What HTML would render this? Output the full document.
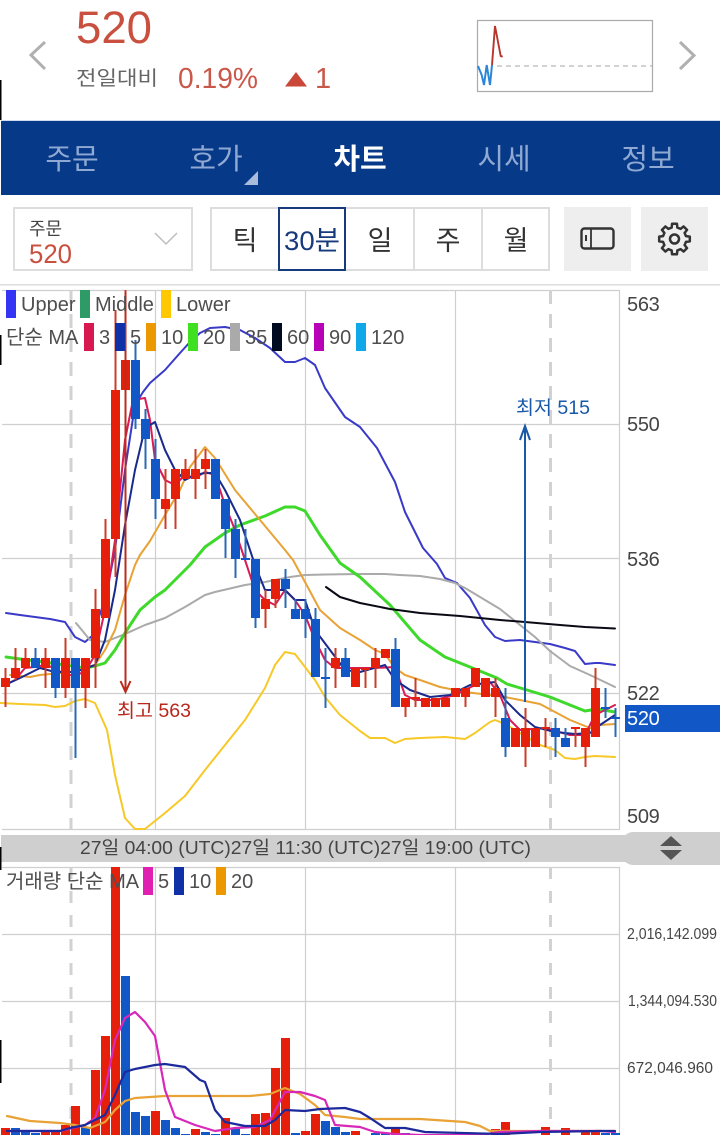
<!DOCTYPE html>
<html lang="ko"><head><meta charset="utf-8"><title>차트</title>
<style>
html,body{margin:0;padding:0;background:#fff}
body{width:720px;height:1135px;overflow:hidden}
svg{display:block}
text{font-family:"Liberation Sans","Noto Sans CJK KR",sans-serif}
.lg{font-size:20px;fill:#4e4e4e}
.ax{font-size:20px;fill:#444;letter-spacing:-.3px}
.vx{font-size:15.5px;fill:#444}
.tab{font-size:29px;fill:#8fa9d2;text-anchor:middle}
.seg{font-size:27px;fill:#333;text-anchor:middle}
</style></head><body>
<svg width="720" height="1135" viewBox="0 0 720 1135" xmlns="http://www.w3.org/2000/svg">
<rect width="720" height="1135" fill="#fff"/>

<!-- header -->
<text x="76" y="43" font-size="45" fill="#c9503f" textLength="76" lengthAdjust="spacingAndGlyphs">520</text>
<text x="76" y="85" font-size="20" fill="#666" textLength="82" lengthAdjust="spacingAndGlyphs">전일대비</text>
<text x="178" y="88" font-size="29" fill="#c9584a" textLength="80" lengthAdjust="spacingAndGlyphs">0.19%</text>
<path d="M285 86.500L296 72L307 86.500Z" fill="#c9483a"/>
<text x="315" y="88" font-size="29" fill="#c9584a">1</text>
<path d="M45 42L31 55L45 69" fill="none" stroke="#b0b0b0" stroke-width="3"/>
<path d="M680 42L694 55.500L680 69" fill="none" stroke="#b0b0b0" stroke-width="3"/>
<rect x="477.500" y="20.500" width="175" height="71" fill="#fff" stroke="#aaa" stroke-width="1.200"/>
<path d="M497 66H652" stroke="#c4c4c4" stroke-width="1.500" stroke-dasharray="5 4"/>
<path d="M478 66L481.700 75L484 85L486.700 65L490 85L492 65" fill="none" stroke="#2b86d6" stroke-width="2"/>
<path d="M492 65L495 26L500.700 56L502.700 56.700" fill="none" stroke="#b8352b" stroke-width="1.900"/>
<rect x="0" y="80" width="1.500" height="40" fill="#000"/>

<!-- tabs -->
<rect x="1" y="120" width="719" height="1.500" fill="#cfdcf0"/>
<rect x="1" y="121" width="719" height="74" fill="#073989"/>
<text class="tab" x="72" y="169">주문</text>
<text class="tab" x="216" y="169">호가</text>
<text class="tab" x="360" y="169" style="fill:#fff;font-weight:700">차트</text>
<text class="tab" x="504" y="169">시세</text>
<text class="tab" x="648" y="169">정보</text>
<path d="M258 171V185H244Z" fill="#a9bcdb"/>

<!-- controls -->
<rect x="14" y="208" width="178" height="62" fill="#fff" stroke="#ddd" stroke-width="2"/>
<text x="29" y="235" font-size="18" fill="#444">주문</text>
<text x="29" y="263" font-size="27" fill="#c9503f" textLength="43" lengthAdjust="spacingAndGlyphs">520</text>
<path d="M155 233L166 244L177 233" fill="none" stroke="#bdbdbd" stroke-width="1.500"/>
<rect x="211" y="208" width="338" height="62" fill="#fff" stroke="#ddd" stroke-width="2"/>
<path d="M414 208V270M482 208V270" stroke="#ddd" stroke-width="2"/>
<rect x="279" y="208" width="66" height="62" fill="#fff" stroke="#163a7c" stroke-width="2"/>
<text class="seg" x="245" y="250">틱</text>
<text class="seg" x="312" y="250" style="fill:#163a7c" textLength="56" lengthAdjust="spacingAndGlyphs">30분</text>
<text class="seg" x="380" y="250">일</text>
<text class="seg" x="448" y="250">주</text>
<text class="seg" x="516" y="250">월</text>
<rect x="564" y="207" width="67" height="64" fill="#eee"/>
<rect x="641" y="207" width="67" height="64" fill="#eee"/>
<rect x="581.500" y="228.500" width="32" height="20" rx="3" fill="none" stroke="#333" stroke-width="2.400"/>
<path d="M591 229V248" stroke="#333" stroke-width="1.800"/>
<path d="M586 235V241" stroke="#333" stroke-width="2"/>
<g transform="translate(674.500 239)" fill="none" stroke="#333" stroke-width="2.500" stroke-linejoin="round">
<circle r="4.500"/>
<path d="M11.450 -2.850L15.310 -2.420L15.310 2.420L11.450 2.850L10.110 6.080L12.540 9.110L9.110 12.540L6.080 10.110L2.850 11.450L2.420 15.310L-2.420 15.310L-2.850 11.450L-6.080 10.110L-9.110 12.540L-12.540 9.110L-10.110 6.080L-11.450 2.850L-15.310 2.420L-15.310 -2.420L-11.450 -2.850L-10.110 -6.080L-12.540 -9.110L-9.110 -12.540L-6.080 -10.110L-2.850 -11.450L-2.420 -15.310L2.420 -15.310L2.850 -11.450L6.080 -10.110L9.110 -12.540L12.540 -9.110L10.110 -6.080Z"/>
</g>
<rect x="0" y="284" width="720" height="1.500" fill="#ddd"/>

<!-- main grid -->
<path d="M2 290.500H619.500V829.500H2M2 424.500H619.500M2 558.500H619.500M2 693.500H619.500M155.500 290V829M305.500 290V829M455.500 290V829" fill="none" stroke="#cfcfcf" stroke-width="1.200"/>
<path d="M71 290V829M550.500 290V829" stroke="#d2d2d2" stroke-width="3" stroke-dasharray="14 10"/>

<!-- main lines -->
<g style="fill:none;stroke-linejoin:round;stroke-linecap:round">
<polyline stroke="#3a3ac8" stroke-width="2" points="6,613 20,615 35,617 50,619 65,622 75,637 85,642 92,636 105,600 115,550 125,470 135,405 143,392 150,383 165,370 180,353 190,342 200,333 210,328 225,327 240,330 255,338 270,348 285,362 295,362 305,358 315,365 325,388 345,417 360,427 377,448 395,482 405,512 423,548 437,564 445,578 457,583 470,598 485,625 495,637 505,641 520,640 535,642 550,644 565,648 575,651 585,664 595,663 600,663 615,665"/>
<polyline stroke="#f7c928" stroke-width="2" points="0,703 20,704 45,705 55,707 65,706 75,701 85,699 95,703 107,730 115,775 125,818 135,829 145,829 165,813 185,796 205,770 225,745 245,720 265,688 275,665 285,652 295,654 305,667 315,680 325,697 340,715 360,731 370,738 385,738 395,743 405,739 420,738 445,737 465,739 475,733 490,722 495,720 505,724 540,745 555,750 565,758 575,759 585,757 595,756 615,757"/>
<polyline stroke="#aaa" stroke-width="2" points="76,623 90,640 105,642 125,634 145,625 165,618 185,607 205,595 215,592 245,585 265,582 290,577 305,575 325,574.500 360,574 385,574 400,575 420,576 440,579 455,583 465,588 480,597 500,609 520,625 535,637 550,651 570,666 590,675 615,687"/>
<polyline stroke="#3fd92c" stroke-width="3" points="6,657 20,659 45,662 85,668 95,666 105,663 115,650 125,633 140,610 155,597 165,590 190,565 205,547 225,533 240,525 265,516 285,507 295,507 305,511 320,535 340,563 360,577 390,605 420,640 445,657 470,667 497,678 507,684 527,690 550,697 570,705 585,711 597,709 615,712"/>
<polyline stroke="#e8a235" stroke-width="2" points="10,675 30,677 40,675 50,674 70,672 95,665 105,650 115,630 125,595 135,565 140,555 150,541 165,515 180,490 190,467 205,447 215,458 235,490 260,520 285,550 293,560 305,582 320,610 340,628 360,640 375,650 385,654 395,668 405,675 420,680 440,687 465,692 490,695 505,697 520,700 540,704 555,712 570,720 590,728 600,725 615,724"/>
<polyline stroke="#d81c55" stroke-width="2" points="5,685 15,680 25,668 35,667 45,665 55,668 65,675 75,675 85,672 95,655 105,610 115,540 125,440 133,400 145,398 150,420 155,460 165,480 175,485 185,475 195,478 205,472 215,475 225,505 235,530 245,560 255,590 265,600 275,605 285,590 295,600 305,615 315,640 325,660 335,668 345,668 375,668 395,667 405,695 415,700 435,700 455,695 475,685 490,682 500,695 510,720 520,730 545,728 570,735 585,735 595,715 615,705"/>
<polyline stroke="#1a2a8c" stroke-width="2" points="5,685 20,678 40,668 55,672 75,672 95,665 105,640 115,590 125,525 135,470 145,428 155,422 165,450 175,470 185,480 195,475 205,473 215,473 225,490 240,520 255,565 265,590 285,590 295,600 305,600 315,630 330,650 345,670 360,672 385,665 395,680 410,690 430,697 450,695 470,685 495,682 505,700 520,715 535,727 555,732 575,734 590,733 600,725 615,715"/>
<polyline stroke="#0a0a14" stroke-width="2" points="326,587 340,597 360,603 390,609 420,613 460,616 480,618 500,620 525,622 560,625 585,627 615,628.500"/>
</g>

<g transform="translate(.5 0)">
<!-- candle wicks -->
<path fill="none" stroke="#c93d2a" stroke-width="2" d="M5 668V707M15 648V680M25 648V668M45 648V688M65 638V698M85 658V708M95 589V688M105 519V618M115 310V577M125 290V560M165 469V529M175 469V529M185 459V479M195 449V499M205 449V489M265 590V628M275 579V608M335 648V688M355 668V687M365 669V688M375 648V688M405 698V717M415 678V707M465 688V707M495 678V717M525 708V767M545 718V747M575 728V747M585 728V767M595 668V737"/>
<path fill="none" stroke="#2a6ab4" stroke-width="2" d="M35 648V668M55 658V698M75 658V758M135 340V429M145 409V469M155 439V519M225 499V558M235 519V578M245 529V559M255 559V628M285 569V608M295 599V619M305 599V638M315 608V677M325 648V708M345 648V677M395 638V707M505 688V757M555 718V757M565 728V747M605 688V718M615 708V737"/>
<!-- red bodies -->
<path fill="#e61f0b" d="M.5 678h9v9h-9zM10.500 668h9v10h-9zM20.500 658h9v10h-9zM40.500 658h9v10h-9zM60.500 658h9v30h-9zM80.500 658h9v30h-9zM90.500 609h9v49h-9zM100.500 539h9v79h-9zM110.500 390h9v149h-9zM120.500 360h9v30h-9zM160.500 499h9v10h-9zM170.500 469h9v30h-9zM180.500 469h9v10h-9zM190.500 469h9v10h-9zM200.500 459h9v10h-9zM260.500 599h9v10h-9zM270.500 579h9v20h-9zM330.500 658h9v10h-9zM350.500 668h9v19h-9zM360.500 668h9v2h-9zM370.500 658h9v10h-9zM380.500 649h9v9h-9zM400.500 698h9v9h-9zM410.500 697h9v2h-9zM420.500 698h9v9h-9zM430.500 698h9v9h-9zM440.500 698h9v9h-9zM450.500 688h9v9h-9zM460.500 688h9v9h-9zM470.500 668h9v19h-9zM480.500 678h9v19h-9zM490.500 688h9v9h-9zM510.500 728h9v19h-9zM520.500 728h9v19h-9zM530.500 728h9v19h-9zM540.500 727h9v2h-9zM570.500 727h9v2h-9zM580.500 728h9v19h-9zM590.500 688h9v49h-9z"/>
<!-- blue bodies -->
<path fill="#1158c6" d="M30.500 658h9v10h-9zM50.500 658h9v30h-9zM70.500 658h9v30h-9zM130.500 360h9v59h-9zM140.500 419h9v20h-9zM150.500 459h9v40h-9zM210.500 459h9v40h-9zM220.500 499h9v30h-9zM230.500 529h9v30h-9zM240.500 558h9v2h-9zM250.500 559h9v59h-9zM280.500 579h9v10h-9zM290.500 609h9v10h-9zM300.500 609h9v10h-9zM310.500 619h9v58h-9zM320.500 677h9v2h-9zM340.500 658h9v19h-9zM390.500 649h9v58h-9zM500.500 718h9v29h-9zM550.500 728h9v9h-9zM560.500 738h9v9h-9zM600.500 707h9v2h-9zM610.500 717h9v2h-9z"/>
</g>

<!-- annotations -->
<path d="M125.500 292V692M120.500 681L125.500 692L130.500 681" fill="none" stroke="#b92c1e" stroke-width="2"/>
<path d="M525 702V427M520 440L525 426L530 440" fill="none" stroke="#1a58a8" stroke-width="2"/>
<text x="117" y="717" font-size="19" fill="#b8281c" textLength="74" lengthAdjust="spacingAndGlyphs">최고 563</text>
<text x="516" y="414" font-size="19" fill="#1a58a8" textLength="74" lengthAdjust="spacingAndGlyphs">최저 515</text>

<!-- legends -->
<rect x="6" y="290" width="10" height="28" fill="#3434f4"/><text class="lg" x="21" y="311">Upper</text>
<rect x="80" y="290" width="10" height="28" fill="#2e9a66"/><text class="lg" x="95" y="311">Middle</text>
<rect x="161" y="290" width="10" height="28" fill="#ffc800"/><text class="lg" x="176" y="311">Lower</text>
<text class="lg" x="6" y="344">단순 MA</text>
<rect x="84" y="323" width="10" height="28" fill="#d81850"/><text class="lg" x="99" y="344">3</text>
<rect x="115" y="323" width="10" height="28" fill="#1030a8"/><text class="lg" x="130" y="344">5</text>
<rect x="146" y="323" width="10" height="28" fill="#ec9800"/><text class="lg" x="161" y="344">10</text>
<rect x="188" y="323" width="10" height="28" fill="#3ee020"/><text class="lg" x="203" y="344">20</text>
<rect x="230" y="323" width="10" height="28" fill="#aaa"/><text class="lg" x="245" y="344">35</text>
<rect x="272" y="323" width="10" height="28" fill="#000a20"/><text class="lg" x="287" y="344">60</text>
<rect x="314" y="323" width="10" height="28" fill="#b800b8"/><text class="lg" x="329" y="344">90</text>
<rect x="356" y="323" width="10" height="28" fill="#10a8e8"/><text class="lg" x="371" y="344">120</text>
<rect x="0" y="335" width="1.500" height="30" fill="#000"/>

<!-- axis -->
<text class="ax" x="627" y="311">563</text>
<text class="ax" x="627" y="431">550</text>
<text class="ax" x="627" y="566">536</text>
<text class="ax" x="627" y="700">522</text>
<rect x="625" y="705" width="95" height="27" fill="#1158c6"/>
<text class="ax" x="627" y="725" style="fill:#fff">520</text>
<text class="ax" x="627" y="823">509</text>

<!-- time bar -->
<rect x="1" y="835" width="640" height="27" fill="#cfcfcf"/>
<rect x="622" y="832" width="110" height="33" rx="11" fill="#cfcfcf"/>
<text x="80" y="854" font-size="18" fill="#444" textLength="451" lengthAdjust="spacingAndGlyphs">27일 04:00 (UTC)27일 11:30 (UTC)27일 19:00 (UTC)</text>
<path d="M660 846L671 836L682 846ZM660 850L671 860L682 850Z" fill="#555"/>

<!-- volume grid -->
<path d="M2 867.500H619.500V1135M2 934.500H619.500M2 1001.500H619.500M2 1068.500H619.500M155.500 867V1135M305.500 867V1135M455.500 867V1135" fill="none" stroke="#cfcfcf" stroke-width="1.200"/>
<path d="M71 867V1135M550.500 867V1120" stroke="#d2d2d2" stroke-width="3" stroke-dasharray="12 12"/>

<!-- volume bars -->
<g transform="translate(.5 0)">
<path fill="#e61f0b" d="M.5 1128h9v7h-9zM40.500 1132h9v3h-9zM50.500 1132h9v3h-9zM60.500 1125h9v10h-9zM70.500 1106h9v29h-9zM90.500 1070h9v65h-9zM100.500 1036h9v99h-9zM110.500 867h9v268h-9zM150.500 1111h9v24h-9zM190.500 1129h9v6h-9zM220.500 1118h9v17h-9zM250.500 1114h9v21h-9zM260.500 1113h9v22h-9zM270.500 1068h9v67h-9zM280.500 1038h9v97h-9zM300.500 1131h9v4h-9zM310.500 1114h9v21h-9zM350.500 1131h9v4h-9zM390.500 1127h9v8h-9zM490.500 1129h9v6h-9zM500.500 1122h9v13h-9zM540.500 1127h9v8h-9zM560.500 1128h9v7h-9zM580.500 1132h9v3h-9zM590.500 1132h9v3h-9z"/>
<path fill="#1158c6" d="M10.500 1128h9v7h-9zM20.500 1131h9v4h-9zM30.500 1133h9v2h-9zM80.500 1127h9v8h-9zM120.500 976h9v159h-9zM130.500 1112h9v23h-9zM140.500 1116h9v19h-9zM160.500 1120h9v15h-9zM170.500 1128h9v7h-9zM180.500 1134h9v1h-9zM200.500 1132h9v3h-9zM210.500 1134h9v1h-9zM230.500 1128h9v7h-9zM240.500 1134h9v1h-9zM290.500 1133h9v2h-9zM320.500 1121h9v14h-9zM330.500 1127h9v8h-9zM340.500 1132h9v3h-9zM370.500 1133h9v2h-9zM380.500 1133h9v2h-9zM400.500 1133h9v2h-9zM600.500 1133h9v2h-9zM610.500 1133h9v2h-9z"/>
</g>

<!-- volume lines -->
<g style="fill:none;stroke-linejoin:round;stroke-linecap:round">
<polyline stroke="#e8a235" stroke-width="2.200" points="7,1116 30,1121 60,1123 75,1125 90,1128 105,1122 115,1110 125,1101 135,1098 165,1096 250,1096 270,1094 285,1088 300,1094 315,1105 325,1115 345,1117 360,1119 380,1119 420,1119 465,1122 480,1126 490,1131 540,1131 615,1131"/>
<polyline stroke="#d828b8" stroke-width="2.200" points="7,1131 60,1131 85,1125 95,1118 105,1090 115,1040 125,1018 135,1012 145,1022 155,1036 165,1090 175,1117 195,1125 215,1131 235,1128 255,1127 270,1120 285,1092 300,1092 315,1096 325,1100 335,1125 360,1127 375,1132 395,1134 420,1135 480,1135 500,1132 540,1131 600,1131 615,1132"/>
<polyline stroke="#1c2a9c" stroke-width="2.200" points="7,1131 60,1131 70,1128 85,1125 105,1115 115,1095 125,1072 135,1069 155,1065 165,1064 185,1067 200,1080 205,1082 215,1110 225,1122 245,1126 265,1126 275,1120 285,1110 305,1111 320,1109 345,1108 360,1112 370,1118 385,1128 405,1128 425,1132 500,1134 540,1132 600,1131 615,1131"/>
</g>

<!-- volume legend -->
<text class="lg" x="6" y="888">거래량 단순 MA</text>
<rect x="143" y="867" width="10" height="28" fill="#e020b0"/><text class="lg" x="158" y="888">5</text>
<rect x="174" y="867" width="10" height="28" fill="#1030a8"/><text class="lg" x="189" y="888">10</text>
<rect x="216" y="867" width="10" height="28" fill="#ec9800"/><text class="lg" x="231" y="888">20</text>

<text class="vx" x="627" y="939" textLength="90" lengthAdjust="spacingAndGlyphs">2,016,142.099</text>
<text class="vx" x="628" y="1006" textLength="89" lengthAdjust="spacingAndGlyphs">1,344,094.530</text>
<text class="vx" x="627" y="1073" textLength="86" lengthAdjust="spacingAndGlyphs">672,046.960</text>

<rect x="0" y="847" width="1.500" height="23" fill="#000"/>
<rect x="0" y="1040" width="1.500" height="43" fill="#000"/>
</svg>
</body></html>
